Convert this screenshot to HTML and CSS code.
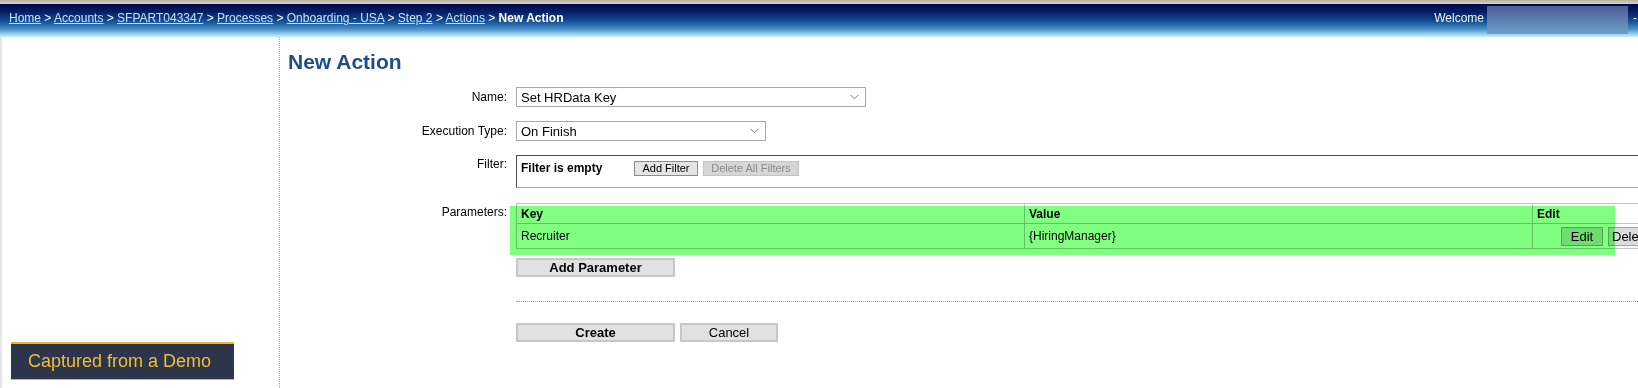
FILE: index.html
```html
<!DOCTYPE html>
<html lang="en">

<head>
    <meta charset="UTF-8">
    <title>New Action</title>
    <link rel="stylesheet" href="styles.css">
</head>

<body>
    <div class="top-strip"></div>
    <div class="header">
        <div class="crumbs">
            <a href="#">Home</a> &gt; <a href="#">Accounts</a> &gt; <a href="#">SFPART043347</a> &gt;
            <a href="#">Processes</a> &gt; <a href="#">Onboarding - USA</a> &gt; <a href="#">Step 2</a> &gt;
            <a href="#">Actions</a> &gt; <b>New Action</b>
        </div>
        <div class="user">
            <span class="welcome">Welcome</span>
            <span class="user-box"></span>
            <span class="dash">-</span>
        </div>
    </div>

    <div class="page">
        <div class="sidebar">
            <div class="demo-badge">Captured from a Demo</div>
        </div>

        <div class="content">
            <h1>New Action</h1>

            <div class="field field-name">
                <label>Name:</label>
                <div class="select select-wide">
                    <span>Set HRData Key</span>
                    <svg width="9" height="6" viewBox="0 0 9 6"><path d="M0.5 0.8 L4.5 4.8 L8.5 0.8" fill="none" stroke="#7a7a7a" stroke-width="1"/></svg>
                </div>
            </div>

            <div class="field field-exec">
                <label>Execution Type:</label>
                <div class="select select-narrow">
                    <span>On Finish</span>
                    <svg width="9" height="6" viewBox="0 0 9 6"><path d="M0.5 0.8 L4.5 4.8 L8.5 0.8" fill="none" stroke="#7a7a7a" stroke-width="1"/></svg>
                </div>
            </div>

            <div class="field field-top field-filter">
                <label>Filter:</label>
                <div class="filter-box">
                    <span class="filter-empty">Filter is empty</span>
                    <button class="btn-small btn-add-filter">Add Filter</button>
                    <button class="btn-small btn-delete-filters" disabled>Delete All Filters</button>
                </div>
            </div>

            <div class="field field-top field-params">
                <label>Parameters:</label>
                <div class="params">
                    <table class="params-table">
                        <colgroup>
                            <col class="col-key">
                            <col class="col-value">
                            <col class="col-edit">
                        </colgroup>
                        <tr class="head-row">
                            <th>Key</th>
                            <th>Value</th>
                            <th>Edit</th>
                        </tr>
                        <tr class="data-row">
                            <td>Recruiter</td>
                            <td>{HiringManager}</td>
                            <td class="edit-cell">
                                <button class="btn-row btn-edit">Edit</button><button class="btn-row btn-delete">Delete</button>
                            </td>
                        </tr>
                    </table>
                    <div class="highlight"></div>
                </div>
            </div>

            <div class="field field-add">
                <span></span>
                <div><button class="btn btn-wide btn-bold">Add Parameter</button></div>
            </div>

            <div class="field field-divider">
                <span></span>
                <div class="divider"></div>
            </div>

            <div class="field field-actions">
                <span></span>
                <div class="actions">
                    <button class="btn btn-wide btn-bold">Create</button>
                    <button class="btn btn-cancel">Cancel</button>
                </div>
            </div>
        </div>
    </div>
</body>

</html>
```

FILE: styles.css
```css
html,
body {
    margin: 0;
    overflow: hidden;
}

body {
    font-family: "Liberation Sans", Arial, sans-serif;
    font-size: 12px;
    color: #000;
    background-color: #fff;
}

/* header */

.top-strip {
    height: 4px;
    background: linear-gradient(#b7b3a5, #d8d4c6);
}

.header {
    height: 33px;
    display: flex;
    align-items: flex-start;
    padding-left: 9px;
    color: #fff;
    overflow: hidden;
    background: linear-gradient(to bottom, #020a4c 0%, #051c62 22%, #0e3f86 45%, #2468aa 62%, #4f98cc 78%, #9fd2ee 92%, #d2ecf8 100%);
}

.crumbs {
    padding-top: 7px;
    line-height: 14px;
    white-space: nowrap;
}

.crumbs a {
    color: #c2e0fa;
    text-decoration: underline;
}

.crumbs b {
    color: #fff;
}

.user {
    margin-left: auto;
    display: flex;
    align-items: flex-start;
    padding-top: 2px;
}

.welcome {
    padding-top: 5px;
    line-height: 14px;
    color: #eef4ff;
}

.user-box {
    width: 141px;
    height: 28px;
    margin-left: 3px;
    background: linear-gradient(#4b5d97, #6f9fc8);
}

.dash {
    padding-top: 5px;
    margin-left: 5px;
    width: 5px;
    line-height: 14px;
}

/* layout */

.page {
    display: flex;
    height: calc(100vh - 37px);
}

.sidebar {
    flex: none;
    width: 280px;
    box-sizing: border-box;
    border-left: 2px solid #e4e4e4;
    border-right: 1px dotted #a6a6a6;
    padding: 0 0 8px 9px;
    display: flex;
    flex-direction: column;
    justify-content: flex-end;
}

.demo-badge {
    width: 223px;
    box-sizing: border-box;
    height: 38px;
    border-top: 2px solid #f2b51f;
    border-bottom: 1px solid #f2b51f;
    background-color: #2c3549;
    color: #f3bd32;
    font-size: 18px;
    line-height: 35px;
    padding-left: 17px;
}

.content {
    flex: none;
    padding-left: 8px;
}

.content h1 {
    margin: 13px 0 0;
    font-size: 21px;
    line-height: 24px;
    color: #1c4c8c;
}

/* form */

.field {
    display: grid;
    grid-template-columns: 219px 1150px;
    column-gap: 9px;
    align-items: center;
}

.field label {
    text-align: right;
    line-height: 14px;
}

.field-top {
    align-items: start;
}

.field-top label {
    padding-top: 2px;
}

.field-name {
    margin-top: 13px;
}

.field-exec {
    margin-top: 14px;
}

.field-filter {
    margin-top: 14px;
}

.field-params {
    margin-top: 15px;
}

.field-add {
    margin-top: 9px;
}

.field-divider {
    margin-top: 24px;
}

.field-actions {
    margin-top: 21px;
}

.select {
    height: 20px;
    box-sizing: border-box;
    border: 1px solid #a9a9a9;
    padding: 0 6px 0 4px;
    display: flex;
    align-items: center;
    justify-content: space-between;
    font-size: 13px;
}

.select-wide {
    width: 350px;
}

.select-narrow {
    width: 250px;
}

.filter-box {
    height: 33px;
    box-sizing: border-box;
    border: 1px solid #4f4f4f;
    border-right-color: #a8a8a8;
    border-bottom-color: #a8a8a8;
    padding: 5px 4px 0;
    display: flex;
    align-items: flex-start;
}

.filter-empty {
    width: 113px;
    font-weight: bold;
    line-height: 15px;
}

.btn-small {
    height: 15px;
    padding: 0;
    font-family: inherit;
    font-size: 11px;
    line-height: 13px;
    color: #000;
    background-color: #e4e4e4;
    border: 1px solid #8c8c8c;
}

.btn-add-filter {
    width: 64px;
}

.btn-delete-filters {
    width: 96px;
    margin-left: 5px;
    color: #8a8a8a;
    background-color: #d6d6d6;
    border-color: #c4c4c4;
}

/* parameters table */

.params {
    position: relative;
}

.params-table {
    width: 1150px;
    border-collapse: collapse;
    table-layout: fixed;
}

.col-key,
.col-value {
    width: 508px;
}

.params-table th,
.params-table td {
    border: 1px solid #c2c2c2;
    padding: 0 4px;
    text-align: left;
    white-space: nowrap;
    overflow: hidden;
}

.head-row {
    height: 20px;
}

.head-row th {
    font-weight: bold;
}

.data-row {
    height: 25px;
}

.params-table td.edit-cell {
    padding-left: 28px;
}

.btn-row {
    height: 19px;
    padding: 0;
    font-family: inherit;
    font-size: 13px;
    color: #000;
    background-color: #dcdcdc;
    border: 1px solid #a4a4a4;
    vertical-align: middle;
}

.btn-edit {
    width: 42px;
}

.btn-delete {
    width: 52px;
    margin-left: 5px;
    text-align: left;
    padding-left: 3px;
}

.highlight {
    position: absolute;
    left: -6px;
    top: 3px;
    width: 1105px;
    height: 49px;
    background-color: #80ff80;
    mix-blend-mode: multiply;
    pointer-events: none;
}

/* buttons */

.btn {
    height: 19px;
    padding: 0;
    font-family: inherit;
    font-size: 13px;
    line-height: 15px;
    color: #000;
    background-color: #e1e1e1;
    border: 2px solid #c7c7c7;
}

.btn-wide {
    width: 159px;
}

.btn-bold {
    font-weight: bold;
}

.btn-cancel {
    width: 98px;
}

.actions {
    display: flex;
    gap: 5px;
}

.divider {
    border-top: 1px dotted #9c9c9c;
}
```
